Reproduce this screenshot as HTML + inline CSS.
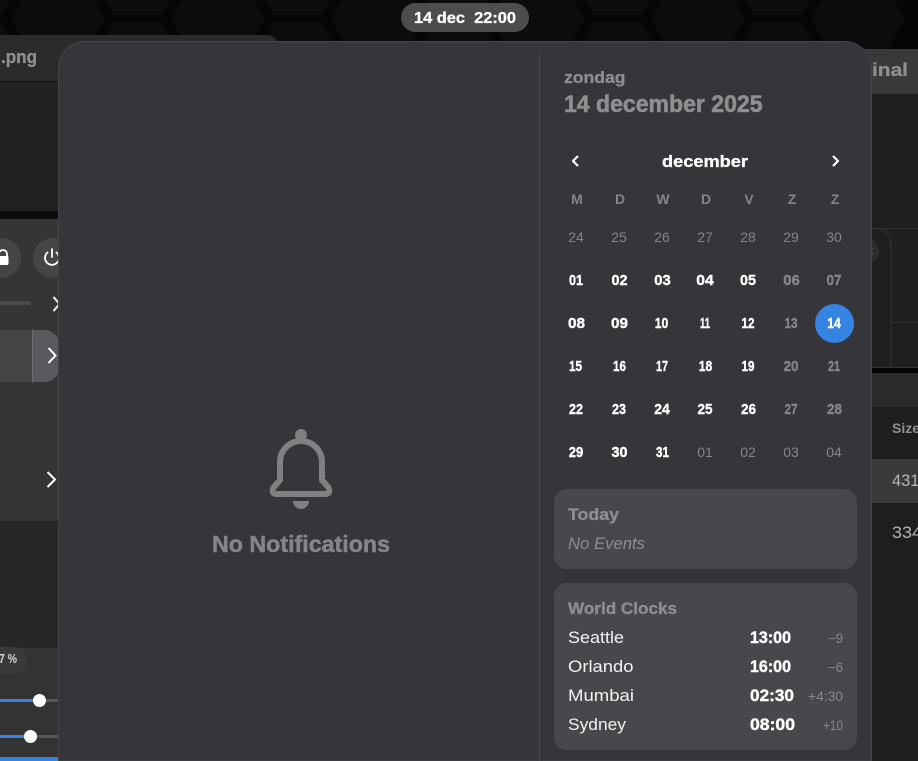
<!DOCTYPE html>
<html><head><meta charset="utf-8">
<style>
html,body{margin:0;padding:0;background:#050505;width:918px;height:761px;overflow:hidden}
svg{display:block;position:absolute;left:0;top:0}
text{font-family:"Liberation Sans",sans-serif}
.b{font-weight:700}
.d{font-weight:700;font-size:14.5px;fill:#fff;text-anchor:middle;stroke:#fff;stroke-width:.4}
.w{fill:#858587;stroke:#858587}
.m{font-weight:400;font-size:14px;fill:#858587;text-anchor:middle}
.h{font-weight:700;font-size:14px;fill:#858587;text-anchor:middle}
.c{font-size:16.5px;fill:#f2f2f2}
.t{font-weight:700;font-size:17px;fill:#fff;stroke:#fff;stroke-width:.4}
.o{font-size:13.5px;fill:#88888a;text-anchor:end}
</style></head><body>
<svg width="918" height="761" viewBox="0 0 918 761" xmlns="http://www.w3.org/2000/svg">
<defs><polygon id="hx" points="-47,0 -24,-41 24,-41 47,0 24,41 -24,41" fill="#0c0c0d"/></defs>
<rect width="918" height="761" fill="#050505"/>
<use href="#hx" x="58" y="19"/><use href="#hx" x="218" y="19"/><use href="#hx" x="378" y="19"/><use href="#hx" x="538" y="19"/><use href="#hx" x="698" y="19"/><use href="#hx" x="858" y="19"/>
<use href="#hx" x="-22" y="-26"/><use href="#hx" x="138" y="-26"/><use href="#hx" x="298" y="-26"/><use href="#hx" x="458" y="-26"/><use href="#hx" x="618" y="-26"/><use href="#hx" x="778" y="-26"/>
<use href="#hx" x="-22" y="63"/><use href="#hx" x="138" y="63"/><use href="#hx" x="298" y="63"/><use href="#hx" x="458" y="63"/><use href="#hx" x="618" y="63"/><use href="#hx" x="778" y="63"/>

<!-- left back window -->
<rect x="0" y="211" width="60" height="8" fill="#0c0c0d"/>
<path d="M0 35H266a14 14 0 0 1 14 14V211H0Z" fill="#222225"/>
<path d="M0 35H266a14 14 0 0 1 14 14V81H0Z" fill="#2b2b2e"/>
<rect x="0" y="81" width="280" height="1" fill="#0f0f10"/>
<text x="1" y="63" class="b" font-size="18" fill="#8e8e90" stroke="#8e8e90" stroke-width=".3" textLength="36" lengthAdjust="spacingAndGlyphs">.png</text>

<!-- left quick settings -->
<rect x="0" y="219" width="60" height="302" fill="#353538"/>
<circle cx="1" cy="258" r="20" fill="#454548"/>
<circle cx="53" cy="258" r="20" fill="#454548"/>
<path d="M-1 257V254a4 4 0 0 1 8 0v3" fill="none" stroke="#fff" stroke-width="1.8"/>
<rect x="-3" y="256" width="11.500" height="9" rx="1.500" fill="#fff"/>
<path d="M47.500 252.500a7 7 0 1 0 9 0M52 249v8" fill="none" stroke="#fff" stroke-width="1.800" stroke-linecap="round"/>
<rect x="-2" y="301" width="33" height="4" rx="2" fill="#4a4a4d"/>
<path d="M53.500 297l6 7-6 7" fill="none" stroke="#fff" stroke-width="2"/>
<rect x="0" y="330" width="33" height="52" fill="#454547"/>
<path d="M32 330H44a16 16 0 0 1 16 16V366a16 16 0 0 1-16 16H32Z" fill="#5a5a5e"/>
<rect x="32" y="330" width="1" height="52" fill="#6e6e72"/>
<path d="M48.500 348l7 7.500-7 7.500" fill="none" stroke="#fff" stroke-width="2"/>
<path d="M47.500 472l7.500 7.500-7.500 7.500" fill="none" stroke="#fff" stroke-width="2"/>
<rect x="0" y="521" width="60" height="127" fill="#27272a"/>
<rect x="0" y="648" width="60" height="113" fill="#333334"/>
<rect x="-20" y="647" width="47" height="27" rx="13" fill="#3a3a3b"/>
<text x="-1" y="663" class="b" font-size="12.500" fill="#d8d8d8" textLength="18" lengthAdjust="spacingAndGlyphs">7&nbsp;%</text>
<rect x="0" y="699" width="60" height="3" fill="#565657"/>
<rect x="0" y="699" width="39" height="3" fill="#3584e4"/>
<circle cx="39.500" cy="700.500" r="6.500" fill="#fff"/>
<rect x="0" y="735" width="60" height="3" fill="#565657"/>
<rect x="0" y="735" width="30" height="3" fill="#3584e4"/>
<circle cx="30.500" cy="736.500" r="6.500" fill="#fff"/>
<rect x="0" y="757" width="60" height="4" fill="#3584e4"/>

<!-- right back window -->
<rect x="860" y="49" width="58" height="45" fill="#39393a"/>
<text x="872" y="76" class="b" font-size="18" fill="#8e8e90" stroke="#8e8e90" stroke-width=".3" textLength="36" lengthAdjust="spacingAndGlyphs">inal</text>
<rect x="860" y="94" width="58" height="134" fill="#1e1e1f"/>
<rect x="860" y="228" width="58" height="140" fill="#1f1f20"/>
<path d="M860 228.500H918" stroke="#303031"/>
<path d="M860 228.500H876a15 15 0 0 1 15 15V367.500" fill="none" stroke="#333334"/>
<circle cx="866" cy="251" r="13" fill="#2c2c2d"/>
<rect x="871" y="248" width="1.500" height="1.500" fill="#777"/><rect x="871" y="253" width="1.500" height="1.500" fill="#777"/>
<path d="M892 322.500H918M860 367.500H918" stroke="#333334"/>
<rect x="892" y="323" width="26" height="44" fill="#1e1e1f"/>
<rect x="860" y="373" width="58" height="34" fill="#2b2b2c"/>
<rect x="860" y="407" width="58" height="354" fill="#1e1e1f"/>
<rect x="860" y="459" width="58" height="44" fill="#3a3a3b"/>
<text x="892" y="433" class="b" font-size="14" fill="#8e8e90" textLength="28" lengthAdjust="spacingAndGlyphs">Size</text>
<text x="892" y="486" font-size="17" fill="#b5b5b6" textLength="32" lengthAdjust="spacingAndGlyphs">431,</text>
<text x="892" y="538" font-size="17" fill="#b5b5b6" textLength="30" lengthAdjust="spacingAndGlyphs">334</text>

<!-- main panel -->
<path d="M58.500 761V68.500a27 27 0 0 1 27-27H844.500a27 27 0 0 1 27 27V761Z" fill="#36353a" stroke="#444449"/>
<rect x="539" y="53" width="1" height="708" fill="#47474c"/>

<!-- top pill -->
<rect x="401" y="3" width="128" height="29" rx="14.500" fill="#4d4d4e"/>
<text x="414" y="23" class="b" font-size="16" fill="#fff" stroke="#fff" stroke-width=".3" textLength="102" lengthAdjust="spacingAndGlyphs">14 dec&nbsp; 22:00</text>

<!-- bell -->
<circle cx="301" cy="435" r="6" fill="#808082"/>
<path d="M280 480V462a21 21 0 0 1 42 0V480L328.500 487.500Q331 494 325.500 494H276.500Q271 494 273.500 487.500Z" fill="none" stroke="#808082" stroke-width="6" stroke-linejoin="round"/>
<path d="M293 501H309a8 8 0 0 1-16 0Z" fill="#808082"/>
<text x="212" y="552" class="b" font-size="23" fill="#858587" stroke="#858587" stroke-width=".5" textLength="178" lengthAdjust="spacingAndGlyphs">No Notifications</text>

<!-- header -->
<text x="564" y="83" class="b" font-size="17" fill="#8e8e90" stroke="#8e8e90" stroke-width=".3" textLength="61.500" lengthAdjust="spacingAndGlyphs">zondag</text>
<text x="564" y="112" class="b" font-size="24" fill="#8e8e90" stroke="#8e8e90" stroke-width=".6" textLength="198.500" lengthAdjust="spacingAndGlyphs">14 december 2025</text>
<path d="M578 156l-5 5 5 5" fill="none" stroke="#fff" stroke-width="2.200" stroke-linejoin="round"/>
<path d="M833 156l5 5-5 5" fill="none" stroke="#fff" stroke-width="2.200" stroke-linejoin="round"/>
<text x="662" y="167" class="b" font-size="17" fill="#fff" stroke="#fff" stroke-width=".3" textLength="86" lengthAdjust="spacingAndGlyphs">december</text>

<!-- weekday row -->
<text x="577" y="204" class="h">M</text><text x="620" y="204" class="h">D</text><text x="663" y="204" class="h">W</text><text x="706" y="204" class="h">D</text><text x="749" y="204" class="h">V</text><text x="792" y="204" class="h">Z</text><text x="835" y="204" class="h">Z</text>
<!-- previous month -->
<text x="576" y="242" class="m">24</text><text x="619" y="242" class="m">25</text><text x="662" y="242" class="m">26</text><text x="705" y="242" class="m">27</text><text x="748" y="242" class="m">28</text><text x="791" y="242" class="m">29</text><text x="834" y="242" class="m">30</text>
<!-- rows -->
<text x="576" y="285" class="d" textLength="14" lengthAdjust="spacingAndGlyphs">01</text><text x="619.500" y="285" class="d" textLength="16" lengthAdjust="spacingAndGlyphs">02</text><text x="662.500" y="285" class="d" textLength="16.500" lengthAdjust="spacingAndGlyphs">03</text><text x="705" y="285" class="d" textLength="17.500" lengthAdjust="spacingAndGlyphs">04</text><text x="748" y="285" class="d" textLength="16" lengthAdjust="spacingAndGlyphs">05</text><text x="791.500" y="285" class="d w" textLength="16.500" lengthAdjust="spacingAndGlyphs">06</text><text x="834" y="285" class="d w" textLength="15" lengthAdjust="spacingAndGlyphs">07</text>
<text x="576.500" y="328" class="d" textLength="17" lengthAdjust="spacingAndGlyphs">08</text><text x="619.500" y="328" class="d" textLength="17" lengthAdjust="spacingAndGlyphs">09</text><text x="661.500" y="328" class="d" textLength="13.500" lengthAdjust="spacingAndGlyphs">10</text><text x="705" y="328" class="d" textLength="10" lengthAdjust="spacingAndGlyphs">11</text><text x="748" y="328" class="d" textLength="13" lengthAdjust="spacingAndGlyphs">12</text><text x="791" y="328" class="d w" textLength="13" lengthAdjust="spacingAndGlyphs">13</text>
<circle cx="834.500" cy="323.500" r="19.500" fill="#3584e4"/>
<text x="834" y="328" class="d" textLength="13.500" lengthAdjust="spacingAndGlyphs">14</text>
<text x="575.500" y="371" class="d" textLength="13" lengthAdjust="spacingAndGlyphs">15</text><text x="619.500" y="371" class="d" textLength="13" lengthAdjust="spacingAndGlyphs">16</text><text x="662" y="371" class="d" textLength="12" lengthAdjust="spacingAndGlyphs">17</text><text x="705.500" y="371" class="d" textLength="13.500" lengthAdjust="spacingAndGlyphs">18</text><text x="748" y="371" class="d" textLength="13" lengthAdjust="spacingAndGlyphs">19</text><text x="791" y="371" class="d w" textLength="15" lengthAdjust="spacingAndGlyphs">20</text><text x="834" y="371" class="d w" textLength="12" lengthAdjust="spacingAndGlyphs">21</text>
<text x="576" y="414" class="d" textLength="14" lengthAdjust="spacingAndGlyphs">22</text><text x="619" y="414" class="d" textLength="14" lengthAdjust="spacingAndGlyphs">23</text><text x="662" y="414" class="d" textLength="15.500" lengthAdjust="spacingAndGlyphs">24</text><text x="705" y="414" class="d" textLength="15" lengthAdjust="spacingAndGlyphs">25</text><text x="748.500" y="414" class="d" textLength="15" lengthAdjust="spacingAndGlyphs">26</text><text x="791" y="414" class="d w" textLength="13" lengthAdjust="spacingAndGlyphs">27</text><text x="834.500" y="414" class="d w" textLength="15" lengthAdjust="spacingAndGlyphs">28</text>
<text x="576" y="457" class="d" textLength="14.500" lengthAdjust="spacingAndGlyphs">29</text><text x="619.500" y="457" class="d" textLength="16" lengthAdjust="spacingAndGlyphs">30</text><text x="662.500" y="457" class="d" textLength="13" lengthAdjust="spacingAndGlyphs">31</text><text x="705" y="457" class="m">01</text><text x="748" y="457" class="m">02</text><text x="791" y="457" class="m">03</text><text x="834" y="457" class="m">04</text>

<!-- today -->
<rect x="554" y="489" width="303" height="80" rx="13" fill="#48484c"/>
<text x="568" y="520" class="b" font-size="17" fill="#8e8e90" stroke="#8e8e90" stroke-width=".3" textLength="51" lengthAdjust="spacingAndGlyphs">Today</text>
<text x="568" y="549" font-size="16.500" font-style="italic" fill="#8e8e90" textLength="77" lengthAdjust="spacingAndGlyphs">No Events</text>

<!-- clocks -->
<rect x="554" y="583" width="303" height="167" rx="13" fill="#48484c"/>
<text x="568" y="614" class="b" font-size="17" fill="#8e8e90" stroke="#8e8e90" stroke-width=".3" textLength="109" lengthAdjust="spacingAndGlyphs">World Clocks</text>
<text x="568" y="643" class="c" textLength="56" lengthAdjust="spacingAndGlyphs">Seattle</text><text x="750" y="643" class="t" textLength="41" lengthAdjust="spacingAndGlyphs">13:00</text><text x="843" y="643" class="o" textLength="15" lengthAdjust="spacingAndGlyphs">−9</text>
<text x="568" y="672" class="c" textLength="65.500" lengthAdjust="spacingAndGlyphs">Orlando</text><text x="750" y="672" class="t" textLength="41" lengthAdjust="spacingAndGlyphs">16:00</text><text x="843" y="672" class="o" textLength="15" lengthAdjust="spacingAndGlyphs">−6</text>
<text x="568" y="701" class="c" textLength="66" lengthAdjust="spacingAndGlyphs">Mumbai</text><text x="750" y="701" class="t" textLength="44" lengthAdjust="spacingAndGlyphs">02:30</text><text x="843" y="701" class="o" textLength="35" lengthAdjust="spacingAndGlyphs">+4:30</text>
<text x="568" y="730" class="c" textLength="58" lengthAdjust="spacingAndGlyphs">Sydney</text><text x="750" y="730" class="t" textLength="45" lengthAdjust="spacingAndGlyphs">08:00</text><text x="843" y="730" class="o" textLength="20" lengthAdjust="spacingAndGlyphs">+10</text>
</svg>
</body></html>
